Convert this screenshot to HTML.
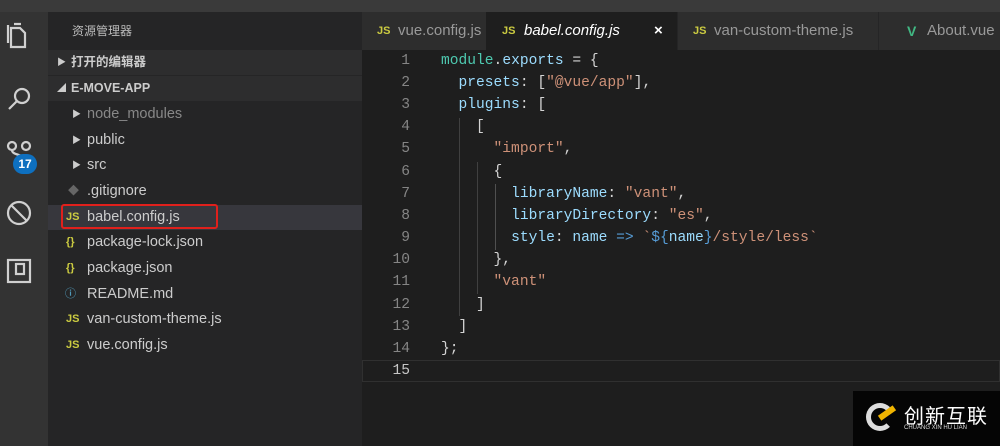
<!DOCTYPE html>
<html><head><meta charset="utf-8"><style>
*{margin:0;padding:0;box-sizing:border-box}
body{width:1000px;height:446px;background:#1e1e1e;position:relative;overflow:hidden;font-family:"Liberation Sans","Noto Sans CJK SC",sans-serif}
.abs{position:absolute}
#top{left:0;top:0;width:1000px;height:12px;background:#3a3a3a}
#act{left:0;top:12px;width:48px;height:434px;background:#333}
#side{left:48px;top:12px;width:314px;height:434px;background:#252526}
.row{position:absolute;left:48px;width:314px;height:25px;line-height:25px;font-size:14.5px;color:#ccc}
.ic{position:absolute;font-size:11px;font-weight:bold;color:#cbcb41}
#tabs{left:362px;top:12px;width:638px;height:38px;background:#252526}
.tab{position:absolute;top:12px;height:38px;line-height:38px;font-size:15px;color:#999;background:#2d2d2d}
.code{position:absolute;left:362px;width:638px;height:22px;line-height:22px;font-family:"Liberation Mono",monospace;font-size:14.6px;white-space:pre;color:#d4d4d4}
.ln{display:inline-block;width:48px;text-align:right;color:#858585}
.c{position:absolute;left:79px}
.v{color:#9cdcfe}.s{color:#ce9178}.k{color:#569cd6}.t{color:#4ec9b0}
</style></head><body>
<div id="top" class="abs"></div>
<div id="act" class="abs"></div>
<svg class="abs" style="left:0;top:12px" width="48" height="280" fill="none" stroke="#d0d0d0" stroke-width="2.2">
<path d="M11 16h9l5 5v14H11z M8 13v18 M14 12h7"/>
<circle cx="22" cy="84" r="7"/><path d="M17 89l-8 8"/>
<circle cx="12" cy="134" r="4"/><circle cx="26" cy="134" r="4"/><path d="M12 138c0 6 14 4 14 10"/>
<circle cx="19" cy="201" r="11"/><path d="M11 193l16 16"/>
<rect x="8" y="248" width="22" height="22"/><rect x="16" y="252" width="8" height="10"/>
</svg>
<div class="abs" style="left:13px;top:154px;width:24px;height:20px;border-radius:10px;background:#0e70c0;color:#fff;font-size:12px;font-weight:bold;text-align:center;line-height:20px">17</div>
<div id="side" class="abs"></div>
<div class="abs" style="left:72px;top:22px;font-size:12px;color:#bbb">资源管理器</div>
<div class="row" style="top:50px;background:#2d2d2e;font-size:12.5px;font-weight:bold;height:25px"><span style="position:absolute;left:9px;font-size:9px">▶</span><span style="position:absolute;left:23px">打开的编辑器</span></div>
<div class="row" style="top:76px;background:#2d2d2e;font-size:12.5px;font-weight:bold"><span style="position:absolute;left:9px;font-size:9px">◢</span><span style="position:absolute;left:23px">E-MOVE-APP</span></div>
<div class="row" style="top:102px;color:#888"><span style="position:absolute;left:24px;font-size:9px;color:#ccc">▶</span><span style="position:absolute;left:39px">node_modules</span></div>
<div class="row" style="top:128px"><span style="position:absolute;left:24px;font-size:9px">▶</span><span style="position:absolute;left:39px">public</span></div>
<div class="row" style="top:153px"><span style="position:absolute;left:24px;font-size:9px">▶</span><span style="position:absolute;left:39px">src</span></div>
<div class="row" style="top:179px"><span class="ic" style="left:20px;color:#666">◆</span><span style="position:absolute;left:39px">.gitignore</span></div>
<div class="row" style="top:205px;background:#37373d"><span class="ic" style="left:18px">JS</span><span style="position:absolute;left:39px">babel.config.js</span></div>
<div class="abs" style="left:61px;top:204px;width:157px;height:25px;border:2px solid #e0201c;border-radius:3px"></div>
<div class="row" style="top:230px"><span class="ic" style="left:18px">{}</span><span style="position:absolute;left:39px">package-lock.json</span></div>
<div class="row" style="top:256px"><span class="ic" style="left:18px">{}</span><span style="position:absolute;left:39px">package.json</span></div>
<div class="row" style="top:282px"><span class="ic" style="left:17px;color:#519aba">ⓘ</span><span style="position:absolute;left:39px">README.md</span></div>
<div class="row" style="top:307px"><span class="ic" style="left:18px">JS</span><span style="position:absolute;left:39px">van-custom-theme.js</span></div>
<div class="row" style="top:333px"><span class="ic" style="left:18px">JS</span><span style="position:absolute;left:39px">vue.config.js</span></div>
<div id="tabs" class="abs"></div>
<div class="tab" style="left:362px;width:124px"><span class="ic" style="left:15px;top:0">JS</span><span style="position:absolute;left:36px">vue.config.js</span></div>
<div class="tab" style="left:486px;width:191px;background:#1e1e1e;color:#fff;font-style:italic"><span class="ic" style="left:16px;top:0;font-style:normal">JS</span><span style="position:absolute;left:38px">babel.config.js</span><span style="position:absolute;left:168px;font-style:normal;font-weight:bold">×</span></div>
<div class="tab" style="left:678px;width:200px"><span class="ic" style="left:15px;top:0">JS</span><span style="position:absolute;left:36px">van-custom-theme.js</span></div>
<div class="tab" style="left:879px;width:121px"><span class="ic" style="left:28px;top:0;color:#41b883;font-size:14px">V</span><span style="position:absolute;left:48px">About.vue</span></div>
<div class="abs" style="left:362px;top:360px;width:638px;height:22px;border:1px solid #303030"></div>
<div class="code" style="top:50px"><span class="ln">1</span><span class="c"><span class="t">module</span>.<span class="v">exports</span> = {</span></div>
<div class="code" style="top:72px"><span class="ln">2</span><span class="c">  <span class="v">presets</span>: [<span class="s">"@vue/app"</span>],</span></div>
<div class="code" style="top:94px"><span class="ln">3</span><span class="c">  <span class="v">plugins</span>: [</span></div>
<div class="code" style="top:116px"><span class="ln">4</span><span class="c">    [</span></div>
<div class="code" style="top:138px"><span class="ln">5</span><span class="c">      <span class="s">"import"</span>,</span></div>
<div class="code" style="top:161px"><span class="ln">6</span><span class="c">      {</span></div>
<div class="code" style="top:183px"><span class="ln">7</span><span class="c">        <span class="v">libraryName</span>: <span class="s">"vant"</span>,</span></div>
<div class="code" style="top:205px"><span class="ln">8</span><span class="c">        <span class="v">libraryDirectory</span>: <span class="s">"es"</span>,</span></div>
<div class="code" style="top:227px"><span class="ln">9</span><span class="c">        <span class="v">style</span>: <span class="v">name</span> <span class="k">=&gt;</span> <span class="s">`</span><span class="k">${</span><span class="v">name</span><span class="k">}</span><span class="s">/style/less`</span></span></div>
<div class="code" style="top:249px"><span class="ln">10</span><span class="c">      },</span></div>
<div class="code" style="top:271px"><span class="ln">11</span><span class="c">      <span class="s">"vant"</span></span></div>
<div class="code" style="top:294px"><span class="ln">12</span><span class="c">    ]</span></div>
<div class="code" style="top:316px"><span class="ln">13</span><span class="c">  ]</span></div>
<div class="code" style="top:338px"><span class="ln">14</span><span class="c">};</span></div>
<div class="code" style="top:360px"><span class="ln" style="color:#c6c6c6">15</span></div>
<div class="abs" style="left:459px;top:118px;width:1px;height:198px;background:#404040"></div>
<div class="abs" style="left:477px;top:162px;width:1px;height:132px;background:#404040"></div>
<div class="abs" style="left:495px;top:184px;width:1px;height:66px;background:#505050"></div>
<div class="abs" style="left:853px;top:391px;width:147px;height:55px;background:#050505"></div>
<div class="abs" style="left:866px;top:403px;width:28px;height:28px;border-radius:50%;border:5px solid #ddd;border-right-color:transparent"></div>
<div class="abs" style="left:878px;top:410px;width:18px;height:6px;background:#f0b400;transform:rotate(-35deg)"></div>
<div class="abs" style="left:904px;top:400px;color:#fff;font-size:20px;letter-spacing:1px">创新互联</div>
<div class="abs" style="left:904px;top:425px;color:#ddd;font-size:6px">CHUANG XIN HU LIAN</div>
</body></html>
